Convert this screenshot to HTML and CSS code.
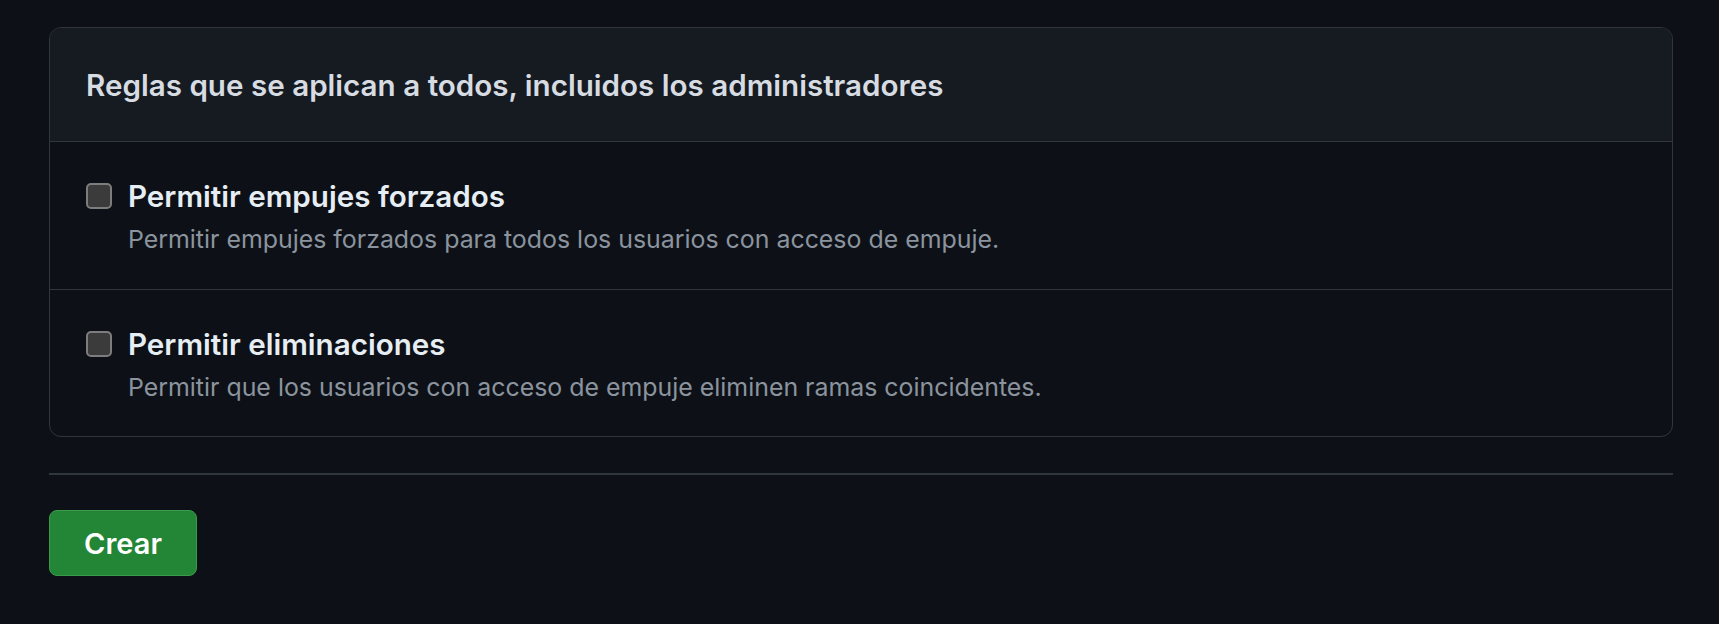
FILE: index.html
```html
<!DOCTYPE html>
<html lang="es">
<head>
    <meta charset="UTF-8">
    <meta name="viewport" content="width=device-width, initial-scale=1.0">
    <title>Reglas de protección</title>
    <link rel="stylesheet" href="styles.css">
</head>
<body>
    <main class="page">
        <section class="rules-box">
            <div class="rules-header">
                <h2>Reglas que se aplican a todos, incluidos los administradores</h2>
            </div>
            <div class="rule-row">
                <label class="rule-label">
                    <input type="checkbox" class="rule-check">
                    <span class="rule-title">Permitir empujes forzados</span>
                </label>
                <p class="rule-desc">Permitir empujes forzados para todos los usuarios con acceso de empuje.</p>
            </div>
            <div class="rule-row">
                <label class="rule-label">
                    <input type="checkbox" class="rule-check">
                    <span class="rule-title">Permitir eliminaciones</span>
                </label>
                <p class="rule-desc">Permitir que los usuarios con acceso de empuje eliminen ramas coincidentes.</p>
            </div>
        </section>
        <hr class="divider">
        <button class="button">Crear</button>
    </main>
</body>
</html>
```

FILE: styles.css
```css
body {
    font-family: Inter, "Noto Sans", "Liberation Sans", sans-serif;
    background-color: #0d1117;
    color: #e6edf3;
    margin: 0;
    padding: 27px 46px 0 49px;
}
.rules-box {
    border: 1px solid #30363d;
    border-radius: 12px;
    overflow: hidden;
}
.rules-header {
    background-color: #161b22;
    border-bottom: 1px solid #30363d;
    height: 113px;
    display: flex;
    align-items: center;
    padding: 0 36px;
}
.rules-header h2 {
    margin: 0;
    font-size: 29.6px;
    font-weight: 600;
    color: #d7dce2;
}
.rule-row {
    height: 147px;
    box-sizing: border-box;
    padding: 36px 36px 0 36px;
}
.rule-row + .rule-row {
    border-top: 1px solid #30363d;
}
.rule-label {
    display: flex;
    align-items: center;
    gap: 16px;
}
.rule-check {
    appearance: none;
    width: 26px;
    height: 26px;
    margin: 0;
    border: 2px solid #7d7d7d;
    border-radius: 5px;
    background-color: #3b3b3b;
}
.rule-title {
    font-size: 29.6px;
    font-weight: 600;
    color: #e6edf3;
}
.rule-desc {
    margin: 10px 0 0 42px;
    font-size: 24.9px;
    color: #8b949e;
}
.divider {
    border: none;
    border-top: 2px solid #30363d;
    margin: 36px 0 35px 0;
}
.button {
    background-color: #238636;
    color: #fff;
    border: 1px solid #3b9b4c;
    width: 148px;
    height: 66px;
    font-family: inherit;
    font-size: 29px;
    font-weight: 600;
    border-radius: 8px;
    cursor: pointer;
}
```
